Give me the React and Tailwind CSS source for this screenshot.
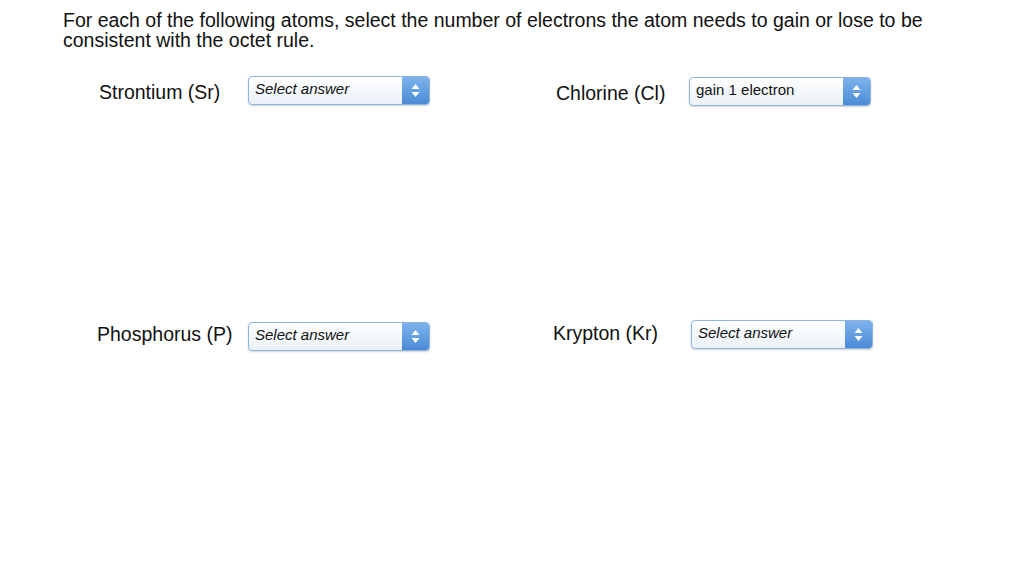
import React from "react";

function Arrows() {
  return (
    <svg width="9" height="15" viewBox="0 0 9 15">
      <path d="M4.5 1 L8.5 6 L0.5 6 Z" fill="white" />
      <path d="M4.5 14 L8.5 9 L0.5 9 Z" fill="white" />
    </svg>
  );
}

function Select({ value, placeholder, className = "" }) {
  return (
    <div
      className={
        "flex h-[29px] w-[182px] items-stretch rounded-[4px] border border-[#8db4df] bg-gradient-to-b from-white to-[#eaf1f8] shadow-[0_1px_2px_rgba(0,0,0,0.18)] " +
        className
      }
    >
      <div
        className={
          "flex flex-1 items-center pb-[2px] pl-[6px] text-[15px] text-[#111] " +
          (placeholder ? "italic" : "")
        }
      >
        {value}
      </div>
      <div className="flex w-[27px] items-center justify-center rounded-r-[3px] bg-gradient-to-b from-[#7db3ec] to-[#4b8bd6]">
        <Arrows />
      </div>
    </div>
  );
}

export default function App() {
  return (
    <div
      className="h-[588px] w-[1024px] bg-white text-[#111]"
      style={{ fontFamily: '"Liberation Sans", Arial, sans-serif' }}
    >
      <div className="pl-[63px] pt-[10px] text-[19.5px] leading-[20px]">
        For each of the following atoms, select the number of electrons the atom needs to gain or lose to be
        <br />
        consistent with the octet rule.
      </div>

      <div className="mt-[26px] flex items-start">
        <div className="mt-[5px] w-[248px] pl-[99px] text-[19.5px] leading-[22px]">Strontium (Sr)</div>
        <Select value="Select answer" placeholder />
        <div className="ml-[126px] mt-[6px] w-[133px] text-[19.5px] leading-[22px]">Chlorine (Cl)</div>
        <Select value="gain 1 electron" className="mt-[1px]" />
      </div>

      <div className="mt-[214px] flex items-start">
        <div className="mt-[3px] w-[248px] pl-[97px] text-[19.5px] leading-[22px]">Phosphorus (P)</div>
        <Select value="Select answer" placeholder className="mt-[2px]" />
        <div className="ml-[123px] mt-[2px] w-[138px] text-[19.5px] leading-[22px]">Krypton (Kr)</div>
        <Select value="Select answer" placeholder />
      </div>
    </div>
  );
}
